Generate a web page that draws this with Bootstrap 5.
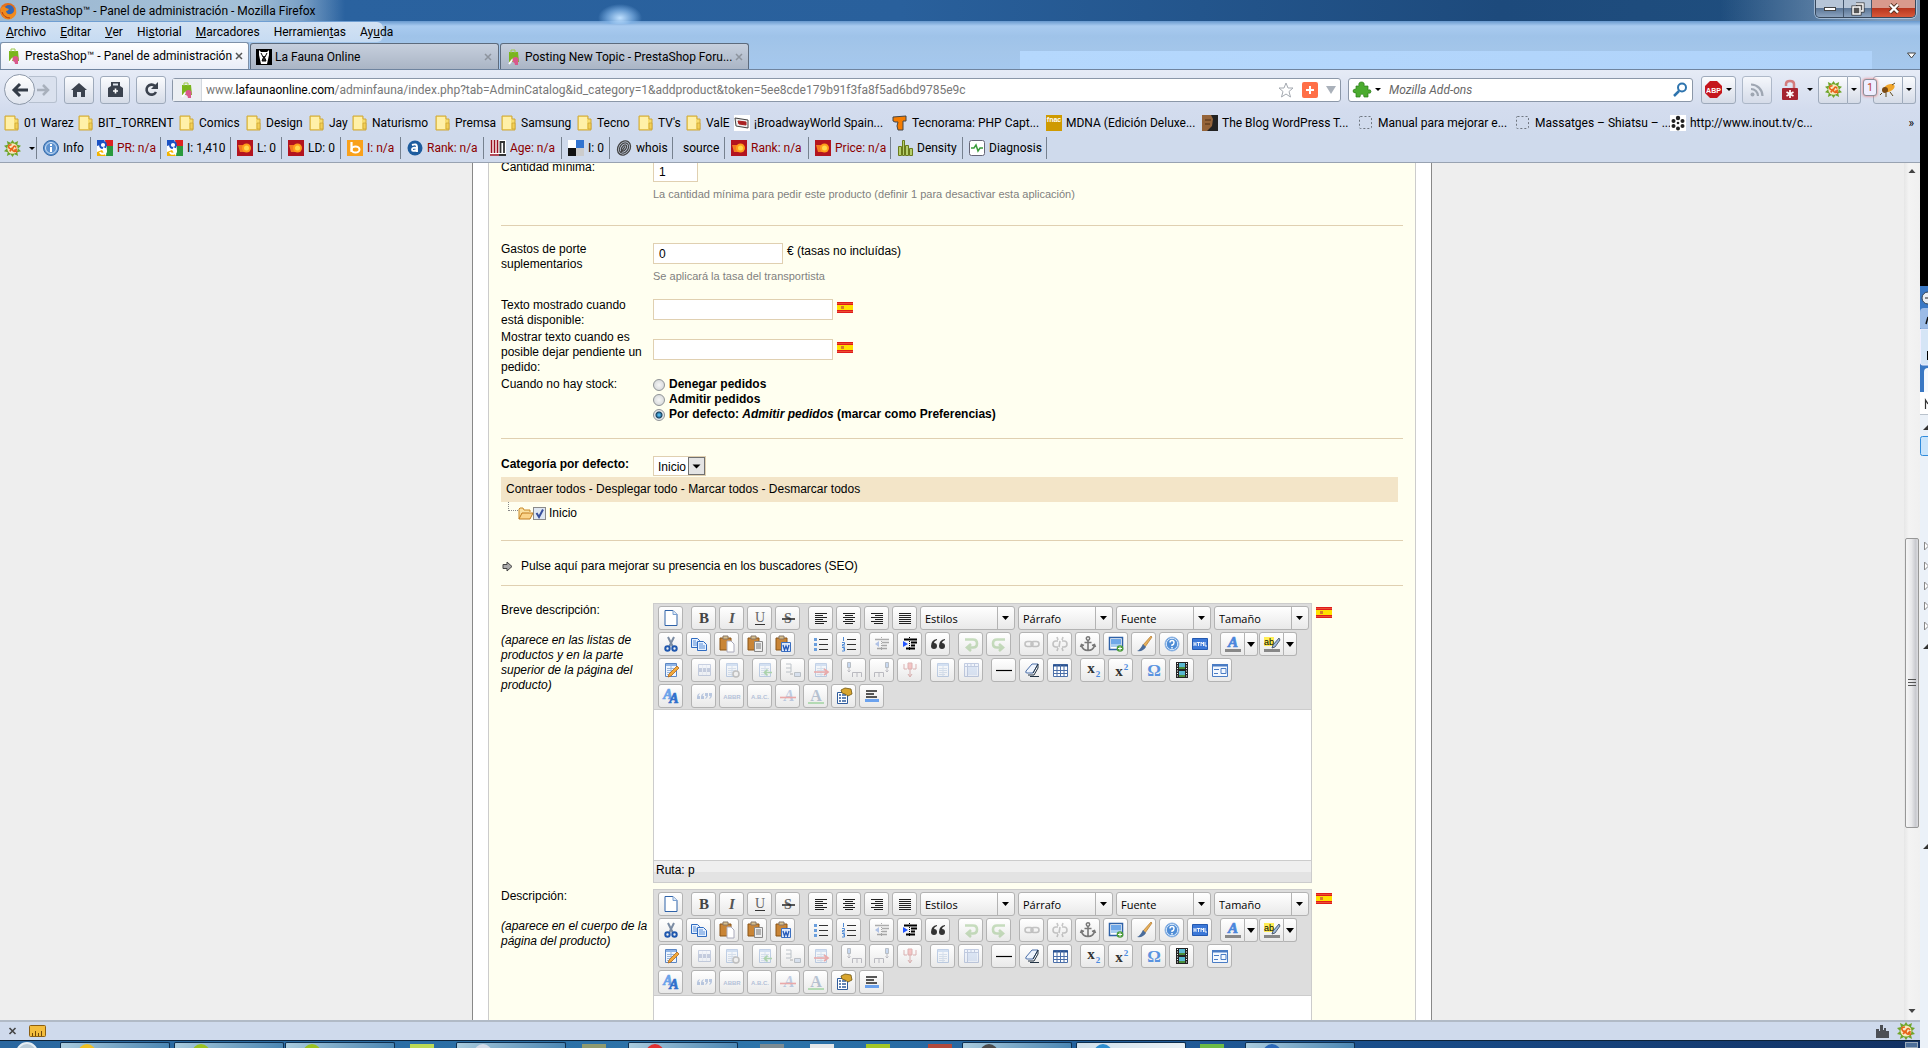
<!DOCTYPE html>
<html lang="es">
<head>
<meta charset="utf-8">
<meta name="viewport" content="width=device-width, initial-scale=1">
<title>PrestaShop™ - Panel de administración</title>
<link href="https://cdn.jsdelivr.net/npm/bootstrap@5.3.0/dist/css/bootstrap.min.css" rel="stylesheet">
<script src="https://cdn.jsdelivr.net/npm/bootstrap@5.3.0/dist/js/bootstrap.bundle.min.js"></script>
<style>
body{font:12px/15px "Liberation Sans",Arial,sans-serif;color:#000;background:#000;height:100vh;overflow:hidden}
a{color:inherit;text-decoration:none}
button{padding:0;border:0;background:none;color:inherit;font:inherit}
svg{display:block;flex:none;overflow:visible}
.clipped{overflow:hidden}
.chrome{font-family:Roboto,"Noto Sans",sans-serif;font-size:12px;line-height:16px;white-space:nowrap}
.glass{background:
 radial-gradient(ellipse 22px 14px at 620px 18px,#bfe0ff 0,#7fb2e6aa 60%,#0000 100%) 0 0/100% 24px no-repeat,
 linear-gradient(90deg,#9db8d1 0,#a3c0d8 250px,#8fb0d0cc 300px,#0000 345px) 0 0/100% 21px no-repeat,
 linear-gradient(90deg,#0000 1720px,#a9bdd5aa 1880px) 0 0/100% 21px no-repeat,
 linear-gradient(90deg,#4d7aa8 0,#2a629f 340px,#29609c 900px,#1d4a7c 1500px,#20507f) 0 0/100% 21px no-repeat,
 linear-gradient(#5b8fc8 20px,#a9cbf0 26px,#9fc3e9 36px,#a4c6ea 52px,#a5c8ee 69px);height:69px}
.sky{flex:1;margin-left:270px;margin-right:48px;align-self:end;height:18px;background:linear-gradient(90deg,#b5d8fd,#b0d3fa)}
.titlebar{height:22px}
.winset{width:105px}
.winbtns{height:18px;border:1px solid #37485c;border-top:0;border-radius:0 0 5px 5px;overflow:hidden;box-shadow:0 0 0 1px #cfe0f199}
.winbtns button{width:28px;height:17px;display:flex;align-items:center;justify-content:center;border-right:1px solid #43566d;background:linear-gradient(#b6c5d7 45%,#5c7797 50%,#8ba3bf)}
.winbtns .shut{flex:1;border:0;background:linear-gradient(#d99a8c 45%,#b8371f 50%,#d8583a)}
.tablist-arrow{margin:34px 0 0 92px}
.menus{height:20px;width:383px;border-radius:0 6px 6px 0;background:linear-gradient(#d3e2f3,#c6dbf2);padding-left:6px;gap:14px}
.tabs{height:27px}
.tabitem{width:249px;height:26px;margin-right:1px;padding:0 6px 0 5px;gap:3px;border:1px solid #5d6b7d;border-bottom:0;border-radius:3px 3px 0 0;background:linear-gradient(#c6cfdd,#aab5c5)}
.tabitem.active{background:linear-gradient(#fff,#e8edf7);height:27px;border-color:#7d90a8}
.navrow{height:40px;background:linear-gradient(#e6ebf6,#d3dcee);border-top:1px solid #6f849f;padding:0 4px}
.tb{height:28px;width:30px;border:1px solid #9eaabb;border-radius:3px;background:linear-gradient(#fbfcfe,#d5dbe7);display:flex;align-items:center;justify-content:center}
.tb.wide{width:35px}
.tb.faded{margin:0 0 0 6px;opacity:.75}
.tb.caretbtn{width:13px;border-left:0;border-radius:0 3px 3px 0}
.lockbtn{width:46px;padding-left:10px;gap:9px}
.bugcount{width:14px;margin:-4px -4px 0 2px;border:1px solid #8b8f99;border-radius:3px;background:#eef;color:#b32;font-size:10px;line-height:15px;z-index:1;box-shadow:0 0 3px #e66}
.car{width:0;height:0;border:3px solid #0000;border-top:3px solid #000;border-bottom:0;flex:none}
.back{width:31px;height:31px;border-radius:50%;border:1px solid #8e99a9;background:linear-gradient(#fff,#dfe4ee);display:flex;align-items:center;justify-content:center;z-index:1}
.fwd{height:27px;width:28px;margin-left:-6px;border:1px solid #b6c0cf;border-left:0;border-radius:0 3px 3px 0;background:#dae1ee;display:flex;align-items:center;justify-content:end;padding-right:6px}
.homeset{gap:6px;margin-left:7px}
.fieldbar{height:24px;border:1px solid #8b97a8;border-radius:3px;background:#fff}
.urlbar{flex:1;margin-left:6px;color:#777}
.ident{width:29px;height:22px;background:#eceff3;border-right:1px solid #d3d8de}
.searchbar{width:345px;margin-left:7px}
.searchbar input{border:0;outline:0;background:none;flex:1;font-style:italic;padding:0}
.searchbar input::placeholder{color:#666;opacity:1}
.marks,.seobar{display:grid;background:#cfdaec}
.marks{height:27px;padding:0 6px 0 4px;grid-template-columns:74px 101px 67px 63px 43px 83px 66px 76px 61px 48px 48px 158px 154px 156px 156px 157px 155px 1fr;align-items:center;background:linear-gradient(#d3dcee,#cfdaec)}
.marks a,.seobar a{display:flex;align-items:center;gap:4px}
.seobar{height:27px;grid-template-columns:37px 54px 70px 70px 51px 59px 60px 83px 78px 48px 63px 52px 84px 82px 72px 84px;border-bottom:1px solid #98a2b1;padding:1px 0 3px}
.seobar>*{border-right:1px solid #76818f;padding-left:6px}
.bad{color:#8b0000}
.viewport-area{flex:1;min-height:0;overflow:hidden;background:#eee}
.vscroll{width:16px;background:linear-gradient(90deg,#e6e6e6,#f3f3f3 30%,#f0f0f0);flex:none}
.vthumb{margin:0 1px;height:290px;border:1px solid #979797;border-radius:2px;background:linear-gradient(90deg,#f6f6f6,#e8e8ea 45%,#c9cacf 80%,#dcdce0);display:flex;align-items:center;justify-content:center}
.above{flex:358}.below{flex:175}
.sheet{width:960px;margin:0 auto;background:#fff;border:1px solid #888;border-width:0 1px;padding:0 15px;height:100%}
.cream{background:#fffff0;border:1px solid #ccc;border-width:0 1px;padding:0 12px;height:100%;overflow:hidden}
.pull-up{margin-top:-3px}
.rule{border:0;border-top:1px solid #e0d0b1;opacity:1;margin:16px 0}
.rule.first{margin-top:23px}
.rule.seo-top{margin-bottom:18px}
.rule.seo-end{margin:11px 0 17px}
.block-gap{margin-top:14px}
.line-gap{margin-top:2px}
.lbl{width:152px;flex:none}
.txt{border:1px solid #e0d0b1;background:#fff;height:21px;margin:1px 0 0;padding:0 5px;display:block;border-radius:0}
.w-s{width:45px}.w-m{width:130px}.w-l{width:180px}
.after{padding-top:2px}
.hint{color:#7f7f7f;font-size:11px;margin-top:5px}
.opt{height:15px;font-weight:bold;gap:4px}
.opt input{appearance:none;width:12px;height:12px;border:1px solid #8f9396;border-radius:50%;margin:1px 0 0;background:radial-gradient(#f6f6f6,#cfd2d4)}
.opt input:checked{background:radial-gradient(#4fb4e8 0 1px,#17405f 3px,#e6e8ea 4px)}
.catrow{height:22px}
.catrow label{padding-top:2px}
.catsel{appearance:none;border:1px solid #e0d0b1;height:20px;width:53px;margin-top:1px;padding:2px 0 0 4px;border-radius:0;background:#fff;font:inherit;
 background-image:url("data:image/svg+xml,%3Csvg xmlns='http://www.w3.org/2000/svg' width='17' height='18'%3E%3Crect x='.5' y='.5' width='16' height='17' fill='%23e4e4e4' stroke='%23707070'/%3E%3Cpath d='M4.500 7.500h8l-4 4z'/%3E%3C/svg%3E");background-repeat:no-repeat;background-position:right 0}
.band{background:#f3e5c8;height:25px;line-height:25px;padding-left:5px;margin-right:5px}
.tree{height:22px;padding-left:7px}
.twig{width:10px;height:9px;border:1px dotted #888;border-width:0 0 1px 1px;align-self:start}
.tree input{appearance:none;width:13px;height:13px;border:1px solid #8a8a8a;margin:0 3px 0 0;background:#dfe7f2 url("data:image/svg+xml,%3Csvg xmlns='http://www.w3.org/2000/svg' width='11' height='11'%3E%3Cpath d='M2.500 5l2.500 4L9 1.500' fill='none' stroke='%23374f9b' stroke-width='2'/%3E%3C/svg%3E")}
.editor{width:659px;border:1px solid #ccc;background:#fff}
.tools{background:#ddd;padding:1px 0 0 4px;height:106px;border-bottom:1px solid #ccc}
.trow{height:26px;gap:3px}
.tbtn{width:25px;height:24px;border:1px solid #b3b3b3;border-radius:3px;background:linear-gradient(#fff,#e9e9e9);display:flex;align-items:center;justify-content:center}
.tbtn.off svg{opacity:.35}
.tsep{width:2px}
.tsplit .tbtn:first-child{border-radius:3px 0 0 3px}
.tsplit .tbtn:last-child{width:13px;border-left:0;border-radius:0 3px 3px 0}
.tsplit+.tsplit{margin-left:-2px}
.tsel{appearance:none;width:95px;height:24px;border:1px solid #b3b3b3;border-radius:3px;font:11px "Open Sans","Noto Sans",sans-serif;padding:0 0 0 4px;color:#000;
 background:url("data:image/svg+xml,%3Csvg xmlns='http://www.w3.org/2000/svg' width='17' height='22'%3E%3Cpath d='M.5 0v22' stroke='%23b3b3b3'/%3E%3Cpath d='M5 9h7l-3.500 4z'/%3E%3C/svg%3E") right no-repeat,linear-gradient(#fff,#e9e9e9)}
.writing{display:block;width:100%;height:150px;border:0;resize:none;background:#fff;outline:0}
.path{height:22px;border-top:1px solid #ccc;background:linear-gradient(#efefef 50%,#e3e3e3 50%);padding:2px 2px 0}
.flagbox{margin:4px 0 0 4px}
.next-ed{margin-top:6px}
.statusbar{height:20px;background:#cfdaec;border-top:2px solid #b1bac6;padding:0 5px 0 8px}
.taskbar{height:8px;background:linear-gradient(90deg,#2a679f,#2c74aa 40%,#215c99 60%,#184a86 75%,#123163);border-top:1px solid #0c2238;padding:1px 2px 0 16px;overflow:hidden}
.task{height:7px;width:110px;border:1px solid #0e2f4f;border-bottom:0;border-radius:2px 2px 0 0;background:linear-gradient(100deg,#a9cbdd,#6fa0c2 60%,#4a86b3);overflow:hidden;padding:1px 0 0 16px}
.task.lit{background:linear-gradient(100deg,#cfdfea,#e8f0f5)}
.dab{width:24px;height:5px;margin-top:2px;flex:none}
.showdesk{width:13px;background:#4d6f99;border:1px solid #9ab}
.beside{width:8px;flex:none;background:#ebf1f8}
.dark-part{height:286px;background:#000}
.min0{min-width:0}
</style>
</head>
<body class="d-flex">
<svg width="0" height="0" class="position-absolute">
<defs>
<symbol id="flag" viewBox="0 0 16 11"><path fill="#e01b1b" d="M0 0h16v11H0z"/><path fill="#ffe000" d="M0 3h16v5H0z"/><path d="M0 1.500h16M0 9.500h16" stroke="#f0653a" stroke-width=".7"/><path fill="#d77a2a" d="M4 4h3v3H4z"/></symbol>
<symbol id="folder" viewBox="0 0 16 16"><path d="M1 1h10v3h3v11H1z" fill="#f7dc6f" stroke="#d0a838"/><path d="M2 2h8v12H2z" fill="#fff0a8"/><path d="M11 8h3v6h-3z" fill="#f3cf55" stroke="#c49b2d" stroke-width=".6"/></symbol>
<symbol id="presta" viewBox="0 0 16 16"><path d="M3 3h9l1 10H3z" fill="#7ab51d"/><path d="M5 4V1h4v3" fill="none" stroke="#9cc94a"/><path d="M3 15l4-5" stroke="#fff" stroke-width="2"/><circle cx="9.500" cy="11" r="3" fill="#d9598c"/><path d="M8 12h4v4H9z" fill="#d9598c"/></symbol>
<symbol id="blank" viewBox="0 0 16 16"><rect x="1.500" y="1.500" width="12" height="12" rx="1" fill="none" stroke="#6f7680" stroke-dasharray="2 2"/></symbol>
<symbol id="goog" viewBox="0 0 16 16"><path fill="#fff" d="M0 0h16v16H0z"/><path fill="#d22" d="M8 0h8v6H9z"/><path fill="#2a9a3c" d="M10 6h6v10H9z"/><path fill="#1b52c4" d="M0 0h8L3 5 0 6z"/><path fill="#f4b400" d="M0 16v-4l5-2 4 6z"/><circle cx="6" cy="5" r="3" fill="#fff" stroke="#1b52c4" stroke-width="1.800"/><path d="M6 8q5 2 2 5-4 2-5-1" stroke="#fff" fill="none" stroke-width="2"/></symbol>
<symbol id="semr" viewBox="0 0 16 16"><path fill="#b3141f" d="M0 0h16v16H0z"/><path fill="#f47b20" d="M1 5h6v7H3z"/><circle cx="9.500" cy="8" r="4.500" fill="#ff9e1b"/><circle cx="9.500" cy="8" r="2.500" fill="#ffd84d"/></symbol>
<symbol id="sq" viewBox="0 0 18 18"><path d="M9 0l2 3 4-2-1 4 4 1-3 3 3 3-4 1 1 4-4-2-2 3-2-3-4 2 1-4-4-1 3-3-3-3 4-1-1-4 4 2z" fill="#6fa52a"/><circle cx="9" cy="9" r="5.500" fill="#f7e9c0"/><path d="M8 5Q4 5 5 7.500t3 1.500-2 3M13 8q-2-3-3.500 0t1 4 2.500-3M11 10l3 3" fill="none" stroke="#e8641b" stroke-width="1.700"/></symbol>
</defs>
</svg>

<div class="d-flex flex-column flex-grow-1 vh-100 min0">
<header class="chrome">
 <div class="glass d-flex">
  <div class="d-flex flex-column">
   <div class="titlebar d-flex align-items-center gap-1">
    <svg width="17" height="17" viewBox="0 0 17 17"><circle cx="8" cy="8" r="8" fill="#e5701b"/><circle cx="9" cy="7" r="5" fill="#3467b5"/><path d="M1 5q3-3 5 0l3 1q-1 2-3 2 1 4 5 3 4-1 4-7 3 6-1 10-6 5-11 0-3-4-2-9" fill="#f08a1d"/><path d="M2 9q2 6 8 6" stroke="#b7380d" fill="none"/></svg>
    <span>PrestaShop™ - Panel de administración - Mozilla Firefox</span>
   </div>
   <nav class="menus d-flex align-items-center">
    <a href="#"><u>A</u>rchivo</a><a href="#"><u>E</u>ditar</a><a href="#"><u>V</u>er</a><a href="#">Hi<u>s</u>torial</a><a href="#"><u>M</u>arcadores</a><a href="#">Herramien<u>t</u>as</a><a href="#">Ay<u>u</u>da</a>
   </nav>
   <div class="tabs d-flex align-items-end">
    <div class="tabitem active d-flex align-items-center"><svg width="16" height="16"><use href="#presta"/></svg><span class="flex-grow-1">PrestaShop™ - Panel de administración</span><button aria-label="Cerrar"><svg width="8" height="8" viewBox="0 0 8 8"><path d="M1 1l6 6M7 1L1 7" stroke="#555" stroke-width="1.500"/></svg></button></div>
    <div class="tabitem d-flex align-items-center"><svg width="16" height="16" viewBox="0 0 16 16"><rect width="16" height="16" fill="#000"/><path d="M3 1l2 2h6l2-2v5l-2 9H5L3 6z" fill="#fff"/><path d="M5 4l2 4M11 4L9 8M6 12l2-5 2 5z" stroke="#000" fill="#333"/></svg><span class="flex-grow-1">La Fauna Online</span><button aria-label="Cerrar"><svg width="8" height="8" viewBox="0 0 8 8"><path d="M1 1l6 6M7 1L1 7" stroke="#8d949e" stroke-width="1.500"/></svg></button></div>
    <div class="tabitem d-flex align-items-center"><svg width="16" height="16"><use href="#presta"/></svg><span class="flex-grow-1">Posting New Topic - PrestaShop Foru...</span><button aria-label="Cerrar"><svg width="8" height="8" viewBox="0 0 8 8"><path d="M1 1l6 6M7 1L1 7" stroke="#8d949e" stroke-width="1.500"/></svg></button></div>
   </div>
  </div>
  <div class="sky"></div>
  <div class="winset position-absolute end-0 me-2">
   <div class="winbtns d-flex me-1">
    <button aria-label="Minimizar"><svg width="12" height="6"><rect x=".5" y="1.500" width="11" height="3" fill="#fff" stroke="#444"/></svg></button>
    <button aria-label="Restaurar"><svg width="12" height="12" viewBox="0 0 12 12"><path d="M4 1h7v7H9M1 4h7v7H1z" fill="none" stroke="#333" stroke-width="3"/><path d="M4 1h7v7H9M1 4h7v7H1z" fill="#555" stroke="#fff" stroke-width="1.500"/></svg></button>
    <button class="shut" aria-label="Cerrar ventana"><svg width="12" height="11" viewBox="0 0 12 11"><path d="M2 1.500l8 8M10 1.500l-8 8" stroke="#532" stroke-width="4"/><path d="M2 1.500l8 8M10 1.500l-8 8" stroke="#fff" stroke-width="2.400"/></svg></button>
   </div>
   <svg width="9" height="7" class="tablist-arrow" viewBox="0 0 9 7"><path d="M.5 1h8l-4 5z" fill="#fff" stroke="#444"/></svg>
  </div>
 </div>

 <div class="navrow d-flex align-items-center">
  <button class="back" aria-label="Atrás"><svg width="16" height="14" viewBox="0 0 16 14"><path d="M8 1L2 7l6 6M2 7h14" fill="none" stroke="#333b47" stroke-width="3"/></svg></button>
  <button class="fwd" aria-label="Adelante"><svg width="13" height="12" viewBox="0 0 13 12"><path d="M6 1l5 5-5 5M11 6H0" fill="none" stroke="#a8b0bc" stroke-width="2.500"/></svg></button>
  <div class="homeset d-flex">
   <button class="tb" aria-label="Inicio"><svg width="16" height="14" viewBox="0 0 16 14"><path d="M8 0l8 7h-2v7h-4V9H6v5H2V7H0z" fill="#3b424e"/></svg></button>
   <button class="tb" aria-label="Caja"><svg width="17" height="15" viewBox="0 0 17 15"><path d="M1 6l3-2V0h9v4l3 2v9H1z" fill="#3b424e"/><path d="M6 1.500h5v2H6z" fill="#dfe4ec"/><path d="M8.500 6.500v5M6 9h5" stroke="#fff" stroke-width="1.600"/></svg></button>
   <button class="tb" aria-label="Recargar"><svg width="15" height="15" viewBox="0 0 15 15"><path d="M12 10a5 5 0 1 1-1-6" fill="none" stroke="#3b424e" stroke-width="2.600"/><path d="M14 0v7H7z" fill="#3b424e"/></svg></button>
  </div>
  <div class="urlbar fieldbar d-flex align-items-center">
   <div class="ident d-flex align-items-center justify-content-center"><svg width="16" height="16"><use href="#presta"/></svg></div>
   <div class="flex-grow-1 ps-1" role="textbox" aria-label="Dirección">www.<span class="text-black">lafaunaonline.com</span>/adminfauna/index.php?tab=AdminCatalog&amp;id_category=1&amp;addproduct&amp;token=5ee8cde179b91f3fa8f5ad6bd9785e9c</div>
   <svg width="16" height="16" viewBox="0 0 16 16"><path d="M8 1l2 5h5l-4 3.500 1.500 5.500L8 12l-4.500 3L5 9.500 1 6h5z" fill="#fff" stroke="#a4a9b0"/></svg>
   <svg width="16" height="16" class="ms-2" viewBox="0 0 16 16"><rect width="16" height="16" rx="2" fill="#ff6f47"/><path d="M8 4v8M4 8h8" stroke="#fff" stroke-width="2"/></svg>
   <svg width="10" height="8" class="ms-2 me-1" viewBox="0 0 10 8"><path d="M0 0h10L5 8z" fill="#aab1ba"/></svg>
  </div>
  <div class="searchbar fieldbar d-flex align-items-center gap-1 px-1">
   <svg width="18" height="17" viewBox="0 0 18 17"><path d="M6 5q-1-4 2.500-4T11 5h4v4q3-1 3 1.500T15 12v4h-4q0-3-2-3t-2 3H3v-4q-3 0-3-2t3-2V5z" fill="#4bab2f" stroke="#2c7d18" stroke-width=".7"/></svg><span class="car"></span>
   <input type="search" class="ms-1" placeholder="Mozilla Add-ons" aria-label="Buscar">
   <svg width="15" height="15" viewBox="0 0 15 15"><circle cx="9" cy="5.500" r="4" fill="none" stroke="#2e74ae" stroke-width="2"/><path d="M6 9l-5 5" stroke="#2e74ae" stroke-width="2.500"/></svg>
  </div>
  <button class="tb wide ms-2" aria-label="Adblock Plus"><svg width="17" height="17" viewBox="0 0 17 17"><path d="M5 0h7l5 5v7l-5 5H5l-5-5V5z" fill="#c5161d"/><text x="8.500" y="11.500" font-size="7" font-weight="bold" fill="#fff" text-anchor="middle" font-family="Liberation Sans">ABP</text></svg><span class="car ms-1"></span></button>
  <button class="tb faded" aria-label="RSS"><svg width="14" height="14" viewBox="0 0 14 14"><circle cx="2.500" cy="11.500" r="2" fill="#8b939e"/><path d="M1 6a7 7 0 0 1 7 7M1 1.500A11.500 11.500 0 0 1 12.500 13" fill="none" stroke="#8b939e" stroke-width="2.200"/></svg></button>
  <button class="lockbtn d-flex align-items-center" aria-label="Contraseñas"><svg width="16" height="20" viewBox="0 0 16 20"><path d="M4 6V4q0-3 4-3t4 3v6" fill="none" stroke="#d47c7c" stroke-width="2.500"/><rect y="8" width="16" height="12" rx="1" fill="#a52430"/><path d="M8 10v8M4.500 12l7 4M11.500 12l-7 4" stroke="#fff" stroke-width="1.700"/></svg><span class="car"></span></button>
  <button class="tb rounded-end-0" aria-label="SeoQuake"><svg width="17" height="17"><use href="#sq"/></svg></button><button class="tb caretbtn" aria-label="Más"><span class="car"></span></button>
  <span class="bugcount text-center">1</span>
  <button class="tb rounded-end-0" aria-label="Firebug"><svg width="16" height="15" viewBox="0 0 16 15"><ellipse cx="9" cy="6" rx="6" ry="3.500" fill="#f0a52a" transform="rotate(-25 9 6)"/><circle cx="5" cy="8" r="3" fill="#7a4a14"/><path d="M2 11l-2 2M6 11v4M10 10l3 4M12 3l3-2" stroke="#5d4a20"/></svg></button><button class="tb caretbtn" aria-label="Más"><span class="car"></span></button>
 </div>

 <nav class="marks" id="marks"></nav>
 <div class="seobar" id="seobar"></div>
</header>

<main class="viewport-area d-flex">
 <div class="flex-grow-1 h-100">
  <div class="sheet"><form class="cream" onsubmit="return false">
   <div class="pull-up d-flex"><label class="lbl" for="minq">Cantidad mínima:</label><div><input class="txt w-s" id="minq" value="1"><div class="hint">La cantidad mínima para pedir este producto (definir 1 para desactivar esta aplicación)</div></div></div>
   <hr class="rule first">
   <div class="d-flex"><label class="lbl" for="ship">Gastos de porte<br>suplementarios</label><div><div class="d-flex"><input class="txt w-m me-1" id="ship" value="0"><span class="after">€ (tasas no incluídas)</span></div><div class="hint">Se aplicará la tasa del transportista</div></div></div>
   <div class="block-gap d-flex"><label class="lbl" for="avail">Texto mostrado cuando<br>está disponible:</label><input class="txt w-l" id="avail"><svg class="flagbox" width="16" height="11"><use href="#flag"/></svg></div>
   <div class="line-gap d-flex"><label class="lbl" for="later">Mostrar texto cuando es<br>posible dejar pendiente un pedido:</label><div class="d-flex pt-2"><input class="txt w-l" id="later"><svg class="flagbox" width="16" height="11"><use href="#flag"/></svg></div></div>
   <div class="line-gap d-flex"><div class="lbl">Cuando no hay stock:</div><div>
    <label class="opt d-flex align-items-center"><input type="radio" name="stock">Denegar pedidos</label>
    <label class="opt d-flex align-items-center"><input type="radio" name="stock">Admitir pedidos</label>
    <label class="opt d-flex align-items-center"><input type="radio" name="stock" checked><span>Por defecto: <i>Admitir pedidos</i> (marcar como Preferencias)</span></label></div></div>
   <hr class="rule">
   <div class="catrow d-flex align-items-start"><label class="lbl fw-bold" for="cat">Categoría por defecto:</label><select class="catsel" id="cat"><option>Inicio</option></select></div>
   <div class="band"><a href="#">Contraer todos</a> - <a href="#">Desplegar todo</a> - <a href="#">Marcar todos</a> - <a href="#">Desmarcar todos</a></div>
   <div class="tree d-flex align-items-center"><span class="twig"></span><svg width="15" height="13" viewBox="0 0 15 13"><path d="M1 12V2l1-1h3l1 2h6v2" fill="#fbe0a0" stroke="#c98a2b"/><path d="M1 12L4 6h11l-3 6z" fill="#fbd48a" stroke="#c07a1c"/></svg><input type="checkbox" id="root" checked><label for="root">Inicio</label></div>
   <hr class="rule seo-top">
   <a href="#" class="d-flex align-items-center"><svg width="12" height="11" viewBox="0 0 12 11" class="me-2"><path d="M2 3.500h4V1l5 4.500L6 10V7.500H2z" fill="#aaa" stroke="#444"/></svg>Pulse aquí para mejorar su presencia en los buscadores (SEO)</a>
   <hr class="rule seo-end">
   <div class="d-flex"><div class="lbl"><label for="brief">Breve descripción:</label><br><br><i>(aparece en las listas de productos y en la parte superior de la página del producto)</i></div>
    <div class="editor"><div class="tools"></div><textarea class="writing" id="brief"></textarea><div class="path">Ruta: p</div></div><svg class="flagbox" width="16" height="11"><use href="#flag"/></svg></div>
   <div class="d-flex next-ed"><div class="lbl"><label for="full">Descripción:</label><br><br><i>(aparece en el cuerpo de la página del producto)</i></div>
    <div class="editor"><div class="tools"></div><textarea class="writing" id="full"></textarea><div class="path">Ruta: p</div></div><svg class="flagbox" width="16" height="11"><use href="#flag"/></svg></div>
  </form></div>
 </div>
 <div class="vscroll d-flex flex-column">
  <svg width="16" height="17" viewBox="0 0 16 17"><path d="M4.500 10h7L8 6z" fill="#444"/></svg>
  <div class="above"></div>
  <div class="vthumb"><svg width="8" height="8"><path d="M0 .5h8M0 3.500h8M0 6.500h8" stroke="#555"/></svg></div>
  <div class="below"></div>
  <svg width="16" height="17" viewBox="0 0 16 17"><path d="M4.500 6h7L8 10z" fill="#444"/></svg>
 </div>
</main>

<footer>
 <div class="statusbar d-flex align-items-center">
  <button aria-label="Cerrar barra"><svg width="9" height="8" viewBox="0 0 9 8"><path d="M1.500 1l6 6M7.500 1l-6 6" stroke="#444" stroke-width="1.600"/></svg></button>
  <svg class="ms-2 me-auto" width="22" height="12" viewBox="0 0 22 12"><rect x="4.500" y=".5" width="16" height="11" rx="1" fill="#f3bd3d" stroke="#8d5f10"/><path d="M7.500 11V8M10.500 11V6M13.500 11V8M16.500 11V6" stroke="#70480a"/></svg>
  <svg width="13" height="13" viewBox="0 0 13 13"><path d="M0 13V4h3v2h1V0h3v5h1V3h2v3h3v7z" fill="#4c4f55"/></svg>
  <svg class="ms-2" width="18" height="18"><use href="#sq"/></svg>
 </div>
 <div class="taskbar d-flex" id="taskbar"></div>
</footer>
</div>

<aside class="beside d-flex flex-column">
 <div class="dark-part"></div>
 <svg class="clipped" width="8" height="762" viewBox="0 0 8 762"><path fill="#3a78c4" d="M0 0h8v106H0z"/><circle cx="8" cy="12" r="6" fill="#e8edf2" stroke="#345"/><path d="M5 12h3" stroke="#222"/><path fill="#9cbbe6" d="M0 26q0-4 4-4h4v20H0z"/><path d="M6 38l2-7" stroke="#111" stroke-width="1.500"/><path fill="#d5e5f6" stroke="#eef" d="M.5 43h8v36h-6q-2 0-2-2z"/><path d="M7 65h1v9H7z"/><path fill="#f6f9fd" d="M4 106V86q0-4 4-4v24z"/><path fill="#fff" d="M0 106h8v22H0z"/><path d="M5.500 123v-9l2.500 4" fill="none" stroke="#333" stroke-width="1.200"/><path d="M0 128.500h8" stroke="#b9c2cc"/><path d="M3 144l5-5v5z" fill="#333"/><rect x=".5" y="150.500" width="10" height="19" rx="2" fill="#c9e4fb" stroke="#2f8bdc"/>
 <path d="M4.500 256l4 4-4 4zM4.500 276l4 4-4 4zM4.500 296l4 4-4 4zM4.500 316l4 4-4 4zM4.500 336l4 4-4 4z" fill="#fff" stroke="#888"/><path d="M3 363l5-5v5zM3 563l5-5v5z" fill="#333"/></svg>
</aside>

<script>
const use = (id, s = 16) => `<svg width="${s}" height="${s}"><use href="#${id}"/></svg>`;
const pic = (body, s = 16) => `<svg width="${s}" height="${s}" viewBox="0 0 16 16">${body}</svg>`;
const paint = {
 broadway: '<path fill="#fff" d="M0 0h16v16H0z"/><path d="M1 3l13 2v8L2 11z" fill="#eee" stroke="#444"/><path d="M4 6l8 1v3L5 9z" fill="#a22" stroke="#a22"/>',
 tecno: '<path d="M1 2l13-1v5h-3v9H6l-1-4 1-4H3L1 6z" fill="#f57c00" stroke="#444"/>',
 fnac: '<path fill="#cf9a00" d="M0 0h16v16H0z"/><text x="8" y="7" font-size="7" font-weight="bold" fill="#fff" text-anchor="middle" font-family="Liberation Sans">fnac</text>',
 blog: '<path fill="#222" d="M0 0h16v16H0z"/><path fill="#95643a" d="M0 0l9 0 2 4-1 7-5 5H0z"/><path d="M3 5h6M3 9h5" stroke="#4c2f15"/>',
 inout: '<path fill="#fff" d="M0 0h16v16H0z"/><g fill="#222"><circle cx="8" cy="3" r="2.200"/><circle cx="3.500" cy="6" r="2"/><circle cx="12.500" cy="6" r="2"/><circle cx="3.500" cy="11" r="2"/><circle cx="12.500" cy="11" r="2"/><circle cx="8" cy="13.500" r="2"/><circle cx="8" cy="8" r="1.300"/></g>',
 info: '<circle cx="8" cy="8" r="7.500" fill="#5d92cf" stroke="#356ba8"/><circle cx="8" cy="8" r="5.500" fill="none" stroke="#cfe2f6"/><path d="M8 7v5M8 4v2" stroke="#fff" stroke-width="2"/>',
 bing: '<path fill="#f9a11b" d="M0 0h16v16H0z"/><path d="M4.500 2v10" stroke="#fff" stroke-width="2.200"/><ellipse cx="8.500" cy="9.500" rx="4" ry="3" fill="none" stroke="#fff" stroke-width="2"/>',
 alexa: '<circle cx="8" cy="8" r="7.500" fill="#1d5c9e"/><path d="M5 5q5-2 5 2v5M10 8q-5-1-5 1.500t5 .5" stroke="#fff" fill="none" stroke-width="1.900"/>',
 age: '<path fill="#fff" d="M0 0h16v16H0z"/><path d="M1.500 0v13M4.500 0v13M7.500 0v13M0 15h9" stroke="#912" stroke-width="1.600"/><path d="M10.500 1v12M14 1v12M10 2h5M9 15h7" stroke="#333" stroke-width="1.800"/>',
 deli: '<path fill="#fff" d="M0 0h8v8H0z"/><path fill="#3274d0" d="M8 0h8v8H8z"/><path fill="#111" d="M0 8h8v8H0z"/><path fill="#ccc" d="M8 8h8v8H8z"/>',
 whois: '<g fill="none" stroke="#444" stroke-width="1.300" transform="rotate(35 8 8)"><ellipse cx="8" cy="8" rx="6" ry="7.500"/><ellipse cx="8" cy="8" rx="4" ry="5.500"/><ellipse cx="8" cy="8" rx="2" ry="3.500"/><path d="M8 6v7"/></g>',
 dens: '<path d="M1.500 6.500h3v9h-3zM5.500 .5h2v15h-2zM8.500 5.500h3v10h-3zM12.500 8.500h3v7h-3z" fill="#b5cf6b" stroke="#6a7a1c"/>',
 diag: '<rect x=".5" y=".5" width="15" height="15" rx="2" fill="#fff" stroke="#667"/><path d="M2 8h3l2-3 2 6 2-3h3" fill="none" stroke="#3a9c3a" stroke-width="1.500"/>'
};
const marks = [['folder','01 Warez'],['folder','BIT_TORRENT'],['folder','Comics'],['folder','Design'],['folder','Jay'],['folder','Naturismo'],['folder','Premsa'],['folder','Samsung'],['folder','Tecno'],["folder","TV's"],['folder','ValE'],['broadway','¡BroadwayWorld Spain...'],['tecno','Tecnorama: PHP Capt...'],['fnac','MDNA (Edición Deluxe...'],['blog','The Blog WordPress T...'],['blank','Manual para mejorar e...'],['blank','Massatges – Shiatsu – ...'],['inout','http://www.inout.tv/c...']];
document.getElementById('marks').innerHTML = marks.map(([i,t], n) =>
 `<a href="#">${paint[i] ? pic(paint[i]) : use(i)}<span>${t}</span>${n === marks.length-1 ? '<span class="ms-auto">»</span>' : ''}</a>`).join('');
const seo = [['info','Info'],['goog','PR: n/a',1],['goog','I: 1,410'],['semr','L: 0'],['semr','LD: 0'],['bing','I: n/a',1],['alexa','Rank: n/a',1],['age','Age: n/a',1],['deli','I: 0'],['whois','whois'],['','source'],['semr','Rank: n/a',1],['semr','Price: n/a',1],['dens','Density'],['diag','Diagnosis']];
document.getElementById('seobar').innerHTML = `<button class="d-flex align-items-center gap-2 ps-1" aria-label="SeoQuake">${use('sq',17)}<span class="car"></span></button>` +
 seo.map(([i,t,b]) => `<a href="#" class="${b ? 'bad' : ''}">${i ? (paint[i] ? pic(paint[i]) : use(i)) : '<span></span>'}<span>${t}</span></a>`).join('');

const page = (x='') => `<path d="M2.500 1.500h11v13h-11z" fill="#eef5ff" stroke="#5b86c4"/><path d="M3 2h10v2H3z" fill="#8fb4e6"/><path d="M4 6.500h8M4 8.500h8M4 10.500h8M4 12.500h6M8 4v10" stroke="#9ab6da"/>${x}`;
const clip = x => `<path d="M1 2h11v12H1z" fill="#c98536" stroke="#8a5416"/><path d="M4 0h5v3H4z" fill="#d9c08b" stroke="#876"/>${x}`;
const letter = (t, x, y, s, c, e='') => `<text x="${x}" y="${y}" font-size="${s}" fill="${c}" font-family="Liberation Serif,serif" font-weight="bold" text-anchor="middle" ${e}>${t}</text>`;
const rows = a => `<path d="${a.map(([x,y,w]) => `M${x} ${y}h${w}`).join('')}" stroke="#222"/>`;
const T = {
 doc:['Nuevo','<path d="M2 .5h8l4 4V15.500H2z" fill="#fff" stroke="#2f62a8"/><path d="M10 .5v4h4" fill="#dce9f8" stroke="#7aa0d0"/>'],
 b:['Negrita',letter('B',8,13,15,'#444')], i:['Cursiva',letter('I',8,13,15,'#555','font-style="italic"')],
 u:['Subrayado',letter('U',8,12,14,'#666','style="font-weight:normal"')+'<path d="M3 14.500h10" stroke="#333"/>'],
 s:['Tachado',letter('S',8,13,14,'#666')+'<path d="M2 9h13" stroke="#222" stroke-width="1.500"/>'],
 al:['Izquierda',rows([[2,3.5,12],[2,5.5,8],[2,7.5,12],[2,9.5,8],[2,11.5,12],[2,13.5,9]])],
 ac:['Centro',rows([[2,3.5,12],[4,5.5,8],[2,7.5,12],[4,9.5,8],[2,11.5,12],[4,13.5,8]])],
 ar:['Derecha',rows([[2,3.5,12],[6,5.5,8],[2,7.5,12],[6,9.5,8],[2,11.5,12],[5,13.5,9]])],
 aj:['Justificar',rows([[2,3.5,12],[2,5.5,12],[2,7.5,12],[2,9.5,12],[2,11.5,12],[2,13.5,12]])],
 cut:['Cortar','<path d="M5 1l5 10M11 1L6 11" stroke="#7a8ba3" stroke-width="2"/><circle cx="4.500" cy="12.500" r="2.200" fill="none" stroke="#1f57ae" stroke-width="2"/><circle cx="11.500" cy="12.500" r="2.200" fill="none" stroke="#1f57ae" stroke-width="2"/>'],
 copy:['Copiar','<path d="M.5 2.500h6l2 2v7h-8z" fill="#e5f0ff" stroke="#2f6bc0"/><path d="M6.500 5.500h6l3 3v6h-9z" fill="#e5f0ff" stroke="#2f6bc0"/><path d="M2 5h3M2 7h4M2 9h4M8 8h4M8 10h6M8 12h6" stroke="#5a8fd8"/>'],
 p1:['Pegar',clip('<path d="M8 5h4l3 3v8H8z" fill="#fff" stroke="#aab"/>')],
 p2:['Pegar texto',clip('<path d="M7.500 5.500h8v10h-8z" fill="#eee" stroke="#888"/><path d="M9 8h5M9 10h5M9 12h5" stroke="#777"/>')],
 p3:['Pegar Word',clip('<path d="M6.500 6.500h9v9h-9z" fill="#dce8fb" stroke="#3b6fc0"/><path d="M8 9l1.500 5L11 10l1.500 4L14 9" fill="none" stroke="#2458b8" stroke-width="1.300"/>')],
 ul:['Lista','<path d="M1 2h3v3H1zM1 7h3v3H1zM1 12h3v3H1z" fill="#6b9fdd"/><path d="M6 3.500h9M6 8.500h9M6 13.500h9" stroke="#333"/>'],
 ol:['Lista numerada','<path d="M2.500 1v4M1 6.500h2.500v2H1.500V10H4M1 11.500h2.500V15H1M2 13h1.500" fill="none" stroke="#4f8bd6"/><path d="M6 3.500h9M6 8.500h9M6 13.500h9" stroke="#333"/>'],
 out:['Reducir sangría','<path d="M1 3.500h14M8 6.500h7M8 9.500h5M3 12.500h10" stroke="#222" stroke-width="1.500"/><path d="M7.500 1v14" stroke="#222" stroke-dasharray="1 1"/><path d="M5 5v6L1 8z" fill="#36c"/>'],
 ind:['Aumentar sangría','<path d="M2 3.500h13M9 6.500h6M9 9.500h4M4 12.500h9" stroke="#000" stroke-width="2"/><path d="M7.500 1v14" stroke="#000" stroke-dasharray="1 1"/><path d="M1 5v6l5-3z" fill="#25f"/>'],
 quo:['Cita','<path d="M7 3Q1 4 1 10a3 3 0 1 0 3-3q0-2 3-3zM15 3Q9 4 9 10a3 3 0 1 0 3-3q0-2 3-3z" fill="#333"/>'],
 und:['Deshacer','<path d="M2 3.500h8q4 0 4 4t-4 4H4M8 8l-4 3.500L8 15" fill="none" stroke="#6aa84f" stroke-width="2.600"/>'],
 red:['Rehacer','<path d="M14 3.500H6q-4 0-4 4t4 4h6M8 8l4 3.500L8 15" fill="none" stroke="#6aa84f" stroke-width="2.600"/>'],
 lnk:['Enlace','<rect x="1" y="5.500" width="8" height="5" rx="2.500" fill="none" stroke="#666" stroke-width="1.600"/><rect x="7" y="5.500" width="8" height="5" rx="2.500" fill="none" stroke="#666" stroke-width="1.600"/>'],
 ulk:['Quitar enlace','<path d="M6 5H4a3 3 0 0 0 0 6h2M10 5h2a3 3 0 0 1 0 6h-2M8 5l-1 6M5 1l1 3M11 1l-1 3M5 15l1-3M11 15l-1-3" fill="none" stroke="#666" stroke-width="1.600"/>'],
 anc:['Ancla','<circle cx="8" cy="2.500" r="1.700" fill="none" stroke="#777" stroke-width="1.500"/><path d="M8 4v11M4.500 6.500h7M1.500 9q1 5.500 6.500 5.500T14.500 9M.5 11l1-2.500 2.500 1M15.500 11l-1-2.500-2.500 1" fill="none" stroke="#777" stroke-width="1.600"/>'],
 img:['Imagen','<path d="M1.500 1.500h13v12h-13z" fill="#fff" stroke="#2f62a8" stroke-width="1.500"/><path d="M3 3h10v7H3z" fill="#6fa8e8"/><path d="M3 8h10v3H3z" fill="#a9cdf0"/><circle cx="12" cy="12.500" r="3.300" fill="#4c9c3a"/><path d="M12 10.500v4M10 12.500h4" stroke="#fff"/>'],
 brs:['Limpiar','<path d="M15 0L7 9l2 2 7-10z" fill="#e7b15a" stroke="#b2762a" stroke-width=".7"/><path d="M7 8l3 3q-3 5-9 4 3-1 6-7" fill="#4a6c9a"/>'],
 hlp:['Ayuda','<circle cx="8" cy="8" r="7" fill="#4f8dd6" stroke="#8fb5e4"/><circle cx="8" cy="8" r="5.700" fill="none" stroke="#d8e8fa"/><path d="M6 6.500q0-2 2-2t2 2-2 2.500v1M8 11v1.500" fill="none" stroke="#fff" stroke-width="1.500"/>'],
 htm:['HTML','<path d="M.5 2.500h15v11H.5z" fill="#3b78d8" stroke="#2459b0"/><path d="M2 6v4M4 6v4M2 8h2M5 6.500h3M6.500 6v4M9 10V6l1.300 2L11.500 6v4M13 6v4h2" fill="none" stroke="#fff" stroke-width=".9"/>'],
 ed:['Editar',page('<path d="M14 4l2 2-8 8-3 1 1-3z" fill="#f2a93b" stroke="#b5691a" stroke-width=".8"/>')],
 r1:['Fila','<path d="M2.500 2.500h12v11h-12z" fill="#eaf1fd" stroke="#6c83b5"/><path d="M2 6h13v4H2z" fill="#6c83b5"/><path d="M6.500 3v10M10.500 3v10" stroke="#cdd8ee"/>'],
 r2:['Celda',page('<circle cx="12" cy="12" r="3" fill="#eee" stroke="#666" stroke-width="1.500"/>')],
 r3:['Insertar fila',page('<path d="M15 10.500H8M10.500 7.500l-3 3 3 3" stroke="#2a9a2a" fill="none" stroke-width="1.700"/>')],
 r4:['Insertar fila después','<path d="M1 2h5M1 6h5M1 10h5M6 2v8" stroke="#567" fill="none"/><path d="M9.500 10.500h6v4h-6z" fill="#aac4ea" stroke="#567"/><path d="M8 12H5" stroke="#333"/>'],
 r5:['Borrar fila',page('<path d="M1 10h12M11 7l4 3-4 3" stroke="#d22" fill="none" stroke-width="1.700"/>')],
 c1:['Insertar columna','<path d="M1.500 .5h3v5h-3z" fill="#6c9be0" stroke="#456"/><path d="M3 6v4M1.500 8.500L3 10l1.500-1.500M6.500 15v-4.500h9V15M11 10v5" stroke="#556" fill="none"/>'],
 c2:['Insertar columna después','<path d="M11.500 .5h3v5h-3z" fill="#6c9be0" stroke="#456"/><path d="M13 6v4M11.500 8.500L13 10l1.500-1.500M.5 15v-4.500h9V15M5 10v5" stroke="#556" fill="none"/>'],
 c3:['Borrar columna','<path d="M6 1h4v6H6z" fill="#e66" stroke="#a33"/><path d="M8 7v7M6 12l2 3 2-3M2 2v5h3M14 2v5h-3" stroke="#a33" fill="none"/>'],
 c4:['Dividir',page()], c5:['Combinar','<path d="M1.500 1.500h14v13h-14z" fill="#dfeaff" stroke="#5b78b4"/><path d="M1 4.500h15M4.500 1v14M11.500 1v3M8 1v3" stroke="#5b78b4"/><path d="M5 5h9v8H5z" fill="#a9c4ef"/>'],
 hr:['Regla','<path d="M0 8.500h16" stroke="#000" stroke-width="1.200"/>'],
 ers:['Borrar formato','<path d="M8 2h6l-5 9H3q-2 0-1-2z" fill="#edf3fc" stroke="#4a6ea8"/><path d="M6 14.500h9M9 11l5-9v4l-4 7H4" stroke="#234" fill="none"/>'],
 tbl:['Tabla','<path d="M1.500 2.500h14v12h-14z" fill="#fff" stroke="#4a6ea8"/><path d="M1 3.500h15" stroke="#27508f" stroke-width="2"/><path d="M1 8.500h15M1 11.500h15M5 3v11M8.500 3v11M12 3v11" stroke="#4a6ea8"/>'],
 sub:['Subíndice',letter('x',6,11,15,'#333')+letter('2',13,15,9,'#4b8be0')], sup:['Superíndice',letter('x',6,14,15,'#333')+letter('2',13,8,9,'#4b8be0')],
 omg:['Símbolo',letter('Ω',8,14,17,'#5a93e0')],
 mov:['Multimedia','<path d="M2 0h12v16H2z" fill="#222"/><path d="M5 1h6v6H5zM5 9h6v6H5z" fill="#58b8d0"/><path d="M5 5h6v2H5zM5 13h6v2H5z" fill="#4b8f3a"/><path d="M3.500 1v14M12.500 1v14" stroke="#fff" stroke-dasharray="1 1.500"/>'],
 tpl:['Plantilla','<path d="M.5 2.500h15v12H.5z" fill="#f3f8ff" stroke="#4a7cc4"/><path d="M0 2h16v2.500H0z" fill="#4a7cc4"/><path d="M2 7.500h5M2 11.500h4M9 6.500h5v5H9z" stroke="#4a7cc4" fill="none"/>'],
 css:['Estilo',letter('A',5,11,14,'#6aa2ea','font-style="italic" stroke="#6aa2ea" stroke-width=".7"')+letter('A',11,15,14,'#2f70cc','font-style="italic" stroke="#2f70cc" stroke-width=".7"')],
 qq:['Cita','<path d="M4 5Q1 6 1 9v2h3V8H2.500M8 5Q5 6 5 9v2h3V8H6.500M9 11q3-1 3-4V5H9v3h1.500M13 11q3-1 3-4V5h-3v3h1.500" fill="#4a73b8"/>'],
 abb:['Abreviatura','<text x="8" y="11" font-size="6" fill="#3a63a8" font-weight="bold" text-anchor="middle" font-family="Liberation Sans">ABBR</text>'],
 abc:['Acrónimo','<text x="8" y="11" font-size="6" fill="#3a63a8" font-weight="bold" text-anchor="middle" font-family="Liberation Sans">A.B.C.</text>'],
 del:['Borrado',letter('A',9,13,16,'#5a80bd','font-style="italic"')+'<path d="M0 9.500h16" stroke="#d22" stroke-width="1.600"/>'],
 ins:['Insertado',letter('A',8,13,16,'#44648f')+'<path d="M0 15h16" stroke="#2a2" stroke-width="1.600"/>'],
 att:['Atributos','<path d="M1.500 4.500h10v11h-10z" fill="#fff" stroke="#2f5c9c"/><path d="M3 7h2M6 7h4M3 10h2M6 10h4M3 13h2M6 13h4" stroke="#2f5c9c" stroke-width="1.500"/><path d="M5 2l4-2 6 1 1 5-4 2-3-2-3-1z" fill="#d9a62e" stroke="#6f5512" stroke-width=".8"/>'],
 lin:['Separador','<path d="M2 3h11M2 6h8M2 9h11" stroke="#222" stroke-width="1.600"/><path d="M1 11h14v3H1z" fill="#6ba2ee"/>'],
 fc:['Color de texto',letter('A',8,11,15,'#4a86dc','font-style="italic" stroke="#4a86dc" stroke-width=".7"')+'<path d="M0 13h16v3H0z" fill="#888"/>'],
 bc:['Color de fondo','<path d="M0 1h10v9H0z" fill="#ffee55"/><text x="5" y="8.500" font-size="9" text-anchor="middle" font-family="Liberation Sans">ab</text><path d="M15 2L9 9l-1 3 3-1 5-7z" fill="#9db8dd" stroke="#345" stroke-width=".8"/><path d="M0 13h16v3H0z" fill="#888"/>']
};
const plan = [
 'doc | b i u s | al ac ar aj >Estilos >Párrafo >Fuente >Tamaño',
 'cut copy p1 p2 p3 || ul ol | -out ind quo | -und -red | -lnk -ulk anc img brs hlp htm | +fc +bc',
 'ed | -r1 -r2 | -r3 -r4 -r5 | -c1 -c2 -c3 | -c4 -c5 | hr ers tbl | sub sup | omg mov || tpl',
 'css | -qq -abb -abc -del -ins att lin'];
const tool = k => {
 if (k === '|') return '<span class="tsep"></span>';
 if (k === '||') return '<span class="tsep"></span><span class="tsep"></span>';
 const m = k[0], n = k.slice(1);
 if (m === '>') return `<select class="tsel" aria-label="${n}"><option>${n}</option></select>`;
 const name = '-+'.includes(m) ? n : k;
 const btn = `<button type="button" class="tbtn ${m === '-' ? 'off' : ''}" title="${T[name][0]}">${pic(T[name][1])}</button>`;
 return m === '+' ? `<span class="tsplit d-flex">${btn}<button type="button" class="tbtn" aria-label="Más"><svg width="8" height="5"><path d="M0 0h8L4 5z"/></svg></button></span>` : btn;
};
document.querySelectorAll('.tools').forEach(t => t.innerHTML = plan.map(r => `<div class="trow d-flex align-items-center">${r.split(' ').map(tool).join('')}</div>`).join(''));

/* running programs: [gap before, kind, mark colour] */
const tasks = [[22,'t','#f0c020'],[4,'t','#9bc21f'],[1,'t','#9bc21f'],[15,'d','#bcd955'],[22,'t','#d5dce8'],[16,'d','#8f9a6e'],[22,'t','#e03030'],[22,'d','#7c8b92'],[26,'d','#e3e6e8'],[32,'d','#a3c626'],[38,'d','#b24a3c'],[10,'t','#4b4b4b'],[4,'t lit','#2d8ed0'],[14,'d','#6dbb45'],[21,'t','#2a68b8']];
document.getElementById('taskbar').innerHTML = '<svg width="22" height="7"><circle cx="11" cy="11" r="10" fill="#b9cbd8" stroke="#e4edf3" stroke-width="2"/></svg>' +
 tasks.map(([g,k,c]) => `<span class="flex-shrink-0" style="width:${g}px"></span>` + (k === 'd' ? `<span class="dab" style="background:${c}"></span>` : `<span class="task flex-shrink-0 ${k}"><svg width="20" height="6"><circle cx="10" cy="9" r="9" fill="${c}"/></svg></span>`)).join('') +
 '<span class="showdesk ms-auto"></span>';
</script>
</body>
</html>
